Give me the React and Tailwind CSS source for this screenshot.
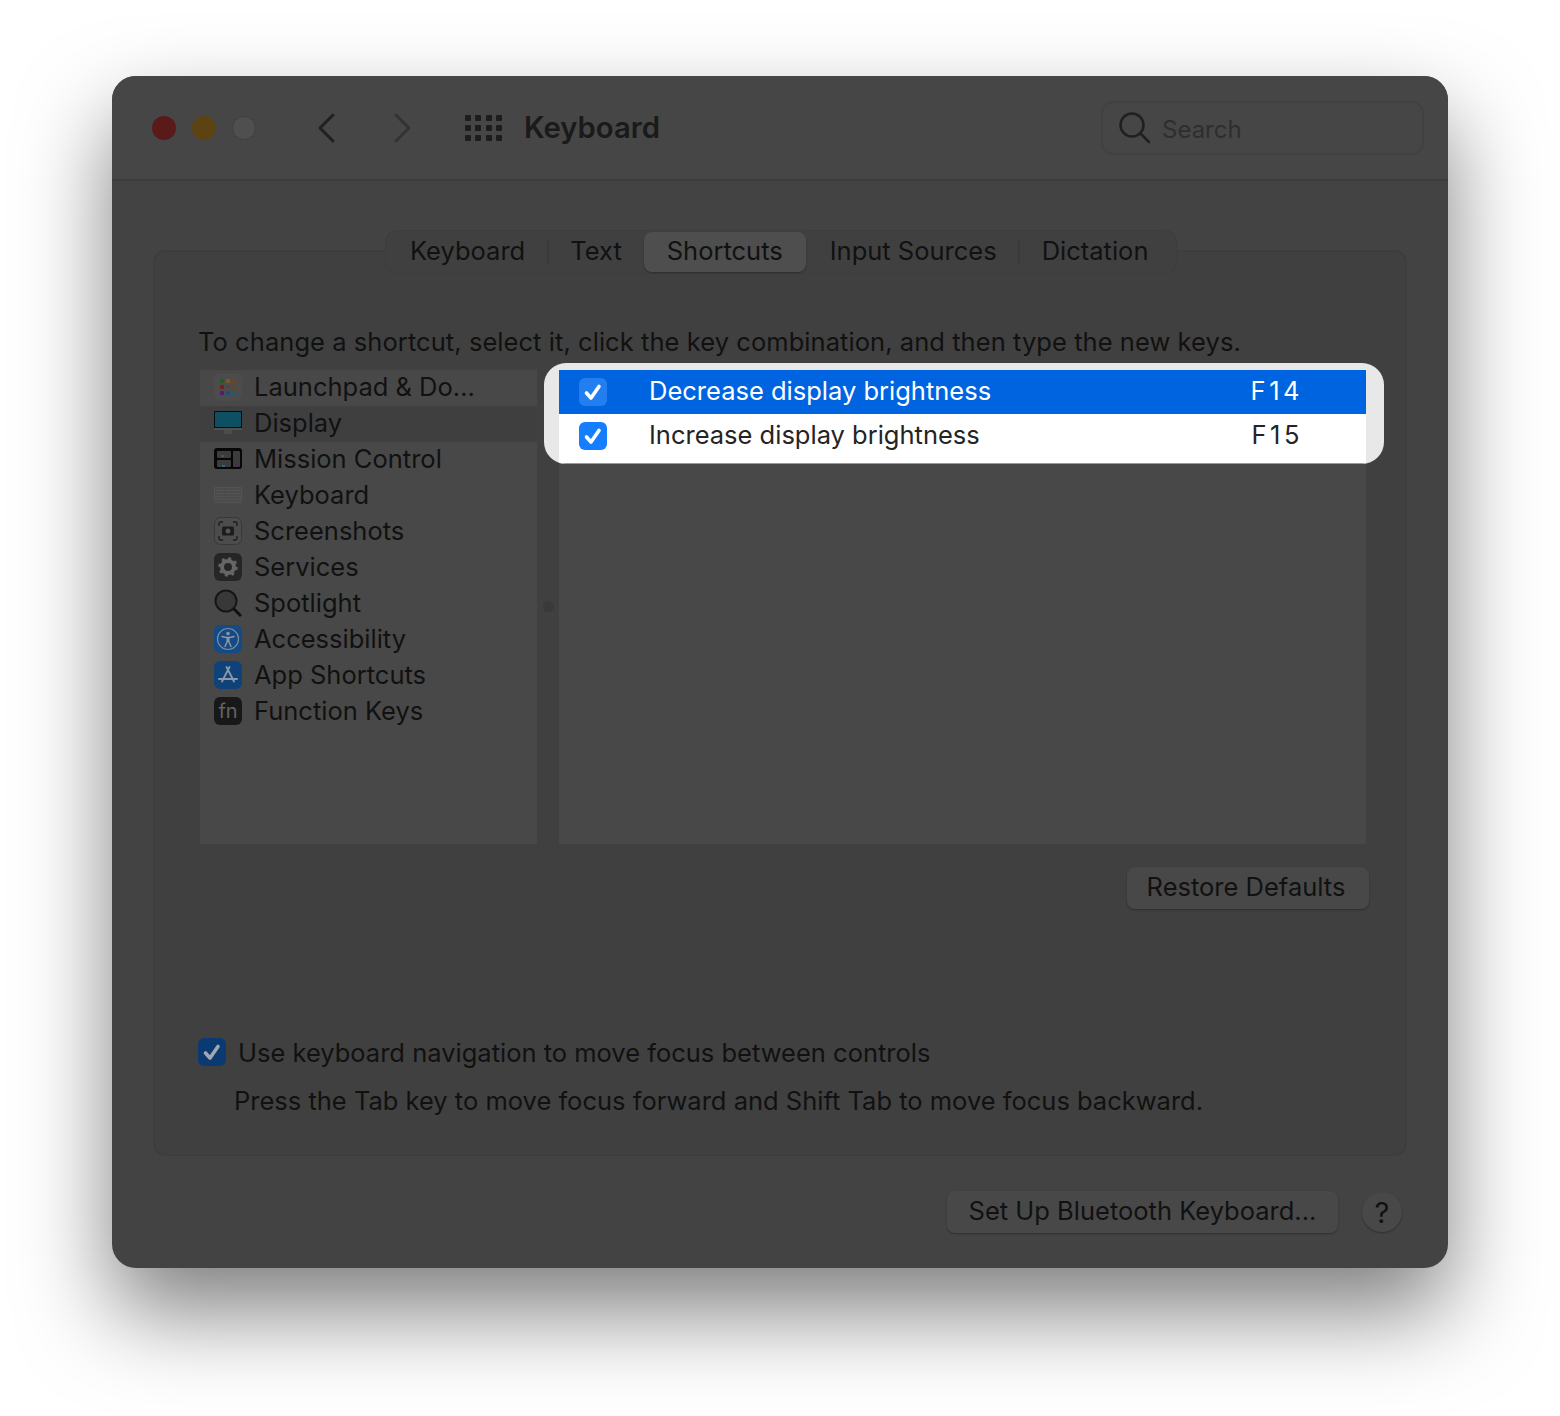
const fontStack = { fontFamily: 'Inter, "Liberation Sans", sans-serif' };

function LaunchpadIcon() {
  const dots = ['#245a24', '#7a5d1a', '#7a421a', '#7a1c1c', '#4a4a4a', '#6a421c', '#4f1b6b', '#1b4f7a', '#1b5d7a'];
  return (
    <div className="w-7 h-7 rounded-md bg-[#4c4c4c] grid grid-cols-3 gap-[2px] p-[6px]">
      {dots.map((c, i) => (
        <span key={i} className="rounded-[1px]" style={{ backgroundColor: c }} />
      ))}
    </div>
  );
}

function DisplayIcon() {
  return (
    <svg width="28" height="28" viewBox="0 0 28 28">
      <rect x="10" y="21" width="8" height="4" fill="#4c4c4c" />
      <rect x="0.5" y="2.5" width="27" height="16" fill="#0f4f62" stroke="#0c0c0c" />
      <rect x="0" y="19" width="28" height="2" fill="#505050" />
    </svg>
  );
}

function MissionIcon() {
  return (
    <svg width="28" height="28" viewBox="0 0 28 28">
      <rect x="0" y="3" width="28" height="21" rx="3" fill="#070707" />
      <rect x="3" y="6" width="14" height="7" rx="1" fill="#3c3c3c" />
      <rect x="3" y="15" width="14" height="7" rx="1" fill="#3c3c3c" />
      <rect x="19" y="6" width="7" height="16" rx="1" fill="#3c3c3c" />
      <rect x="7" y="10" width="3" height="2" fill="#2f6b2f" />
      <rect x="8" y="20" width="3" height="2" fill="#1f6a8a" />
      <rect x="21" y="19" width="3" height="2" fill="#5a1f7a" />
    </svg>
  );
}

function KeyboardIcon() {
  return (
    <svg width="28" height="28" viewBox="0 0 28 28">
      <rect x="0" y="6" width="28" height="16" rx="1" fill="#535353" />
      {[8, 11, 14, 17, 20].map((y) => (
        <line key={y} x1="1" x2="27" y1={y} y2={y} stroke="#404040" strokeWidth="1.2" strokeDasharray="1.6 0.7" />
      ))}
    </svg>
  );
}

function ScreenshotIcon() {
  return (
    <svg width="28" height="28" viewBox="0 0 28 28" fill="none">
      <rect x="0.5" y="0.5" width="27" height="27" rx="6" fill="#4c4c4c" stroke="#383838" />
      <path d="M5 9V6.5A1.5 1.5 0 0 1 6.5 5H9M19 5h2.500A1.500 1.500 0 0 1 23 6.500V9M23 19v2.500A1.500 1.500 0 0 1 21.500 23H19M9 23H6.500A1.500 1.500 0 0 1 5 21.500V19" stroke="#1c1c1c" strokeWidth="1.3" />
      <rect x="8" y="9.500" width="12" height="9" rx="1.500" fill="#1c1c1c" />
      <circle cx="14" cy="14" r="2.500" fill="#555" />
    </svg>
  );
}

function ServicesIcon() {
  return (
    <svg width="28" height="28" viewBox="0 0 28 28">
      <rect width="28" height="28" rx="6" fill="#262626" />
      <circle cx="14" cy="14" r="6" fill="none" stroke="#666666" strokeWidth="4" />
      <circle cx="14" cy="14" r="8.500" fill="none" stroke="#666666" strokeWidth="2.500" strokeDasharray="3 3.670" />
    </svg>
  );
}

function SpotlightIcon() {
  return (
    <svg width="28" height="28" viewBox="0 0 28 28" fill="none">
      <circle cx="12" cy="12" r="10.500" fill="#383838" stroke="#161616" strokeWidth="2" />
      <line x1="19.500" y1="19.500" x2="27" y2="27" stroke="#111111" strokeWidth="3" />
    </svg>
  );
}

function AccessibilityIcon() {
  return (
    <svg width="28" height="28" viewBox="0 0 28 28" fill="none">
      <rect width="28" height="28" rx="6" fill="#144a86" />
      <circle cx="14" cy="14" r="10.500" stroke="#7f8c9a" strokeWidth="1.200" />
      <circle cx="14" cy="8.500" r="1.800" fill="#8c98a6" />
      <path d="M8 11.500C11 12.700 17 12.700 20 11.500" stroke="#8c98a6" strokeWidth="1.500" strokeLinecap="round" />
      <path d="M14 12.500V16.500" stroke="#8c98a6" strokeWidth="3" />
      <path d="M13.500 16 11 21.500M14.500 16 17 21.500" stroke="#8c98a6" strokeWidth="1.500" strokeLinecap="round" />
    </svg>
  );
}

function AppShortcutsIcon() {
  return (
    <svg width="28" height="28" viewBox="0 0 28 28" fill="none">
      <rect width="28" height="28" rx="6" fill="#0f4279" />
      <path d="M15.500 6 8 20.500M12.500 6 20 20.500M5 18h18" stroke="#8c98a6" strokeWidth="1.800" strokeLinecap="round" />
    </svg>
  );
}

function FnIcon() {
  return (
    <div className="w-7 h-7 rounded-md bg-[#181818] flex items-center justify-center text-[20px] leading-none text-[#646464]">
      fn
    </div>
  );
}

const shortcutGroups = [
  { label: 'Launchpad & Do...', icon: <LaunchpadIcon /> },
  { label: 'Display', icon: <DisplayIcon />, selected: true },
  { label: 'Mission Control', icon: <MissionIcon /> },
  { label: 'Keyboard', icon: <KeyboardIcon /> },
  { label: 'Screenshots', icon: <ScreenshotIcon /> },
  { label: 'Services', icon: <ServicesIcon /> },
  { label: 'Spotlight', icon: <SpotlightIcon /> },
  { label: 'Accessibility', icon: <AccessibilityIcon /> },
  { label: 'App Shortcuts', icon: <AppShortcutsIcon /> },
  { label: 'Function Keys', icon: <FnIcon /> },
];

function Checkbox({ className }) {
  return (
    <span className={`w-7 h-7 rounded-md flex items-center justify-center ${className}`}>
      <svg width="28" height="28" viewBox="0 0 28 28" fill="none">
        <path d="M7.5 15 12 20 20 8.500" stroke="currentColor" strokeWidth="3.600" strokeLinecap="round" strokeLinejoin="round" />
      </svg>
    </span>
  );
}

function TabDivider() {
  return <span className="block w-[2px] h-6 bg-[#3a3a3a]" />;
}

export default function App() {
  return (
    <div className="h-[1416px] bg-white pt-[76px] px-[112px] text-[#111111] overflow-hidden" style={fontStack}>
      <div className="h-[1192px] w-[1336px] rounded-[24px] bg-[#434343] shadow-[0_44px_90px_rgba(0,0,0,0.5)] flex flex-col">

        {/* Title bar */}
        <div className="h-[105px] shrink-0 rounded-t-[24px] bg-[#464646] border-b-2 border-[#3c3c3c] flex items-center pl-10 pr-6">
          <div className="flex items-center gap-4">
            <span className="w-6 h-6 rounded-full bg-[#5a1a1a]" />
            <span className="w-6 h-6 rounded-full bg-[#5e4312]" />
            <span className="w-6 h-6 rounded-full bg-[#4f4f4f] border border-[#3f3f3f]" />
          </div>
          <svg className="ml-[60px]" width="20" height="32" viewBox="0 0 20 32" fill="none">
            <path d="M17 3 4 16l13 13" stroke="#202020" strokeWidth="3" strokeLinecap="round" strokeLinejoin="round" />
          </svg>
          <svg className="ml-[57px]" width="20" height="32" viewBox="0 0 20 32" fill="none">
            <path d="M3 3l13 13L3 29" stroke="#333333" strokeWidth="3" strokeLinecap="round" strokeLinejoin="round" />
          </svg>
          <div className="ml-[52px] grid grid-cols-4 gap-x-[4px] gap-y-[4px] w-[37px]">
            {Array.from({ length: 12 }).map((_, i) => (
              <span key={i} className="w-[6px] h-[6px] rounded-[1px] bg-[#1d1d1d]" />
            ))}
          </div>
          <span className="ml-[22px] text-[29.3px] font-semibold leading-none text-[#1a1a1a]">Keyboard</span>
          <div className="ml-auto w-[323px] h-[54px] rounded-xl border-2 border-[#414141] flex items-center pl-[15px] gap-[10px]">
            <svg width="34" height="34" viewBox="0 0 34 34" fill="none">
              <circle cx="14" cy="14" r="11.500" stroke="#202020" strokeWidth="2.500" />
              <line x1="22.500" y1="22.500" x2="31" y2="31" stroke="#202020" strokeWidth="2.500" strokeLinecap="round" />
            </svg>
            <span className="text-[24px] text-[#2e2e2e] mt-1">Search</span>
          </div>
        </div>

        {/* Tabs */}
        <div className="relative z-10 self-center mt-[49px] ml-[2px] h-[44px] w-[792px] rounded-xl bg-[#404040] border border-[#3d3d3d] flex items-center text-[25.5px] leading-none">
          <span className="ml-[24px] mb-[2px]">Keyboard</span>
          <span className="ml-[22px]"><TabDivider /></span>
          <span className="ml-[21px] mb-[2px]">Text</span>
          <span className="ml-[22px] h-[40px] w-[162px] rounded-lg bg-[#4e4e4e] shadow-[0_1px_2px_rgba(0,0,0,0.3)] flex items-center justify-center pb-[2px]">Shortcuts</span>
          <span className="ml-[24px] mb-[2px]">Input Sources</span>
          <span className="ml-[21px]"><TabDivider /></span>
          <span className="ml-[22px] mb-[2px]">Dictation</span>
        </div>

        {/* Group box */}
        <div className="mt-[-24px] mx-[41px] h-[906px] rounded-xl bg-[#404040] border-2 border-[#3d3d3d] pt-[72px] pl-[43px] flex flex-col shrink-0 text-[25.5px]">
          <p className="leading-9 whitespace-nowrap tracking-[0.06px]">
            To change a shortcut, select it, click the key combination, and then type the new keys.
          </p>

          <div className="flex mt-[10px] pl-[2px] items-stretch h-[474px]">
            <div className="w-[337px] bg-[#484848] flex flex-col">
              {shortcutGroups.map((g) => (
                <div key={g.label} className={`h-9 pl-[14px] pb-[2px] flex items-center gap-3 shrink-0 ${g.selected ? 'bg-[#3f3f3f]' : ''}`}>
                  {g.icon}
                  <span>{g.label}</span>
                </div>
              ))}
            </div>
            <div className="w-[22px] flex items-center justify-center">
              <span className="w-[11px] h-[11px] rounded-full bg-[#3a3a3a] mt-[-1px]" />
            </div>
            <div className="relative w-[807px] bg-[#484848]">
              {/* highlighted callout over the list */}
              <div className="absolute left-[-15px] top-[-7px] w-[840px] h-[101px] rounded-[22px] bg-[#e8e8e8] pt-[7px] pl-[15px] overflow-hidden">
                <div className="w-[807px] h-11 bg-[#0064e1] flex items-center pl-5 text-white">
                  <Checkbox className="bg-[#237ff0] text-white" />
                  <span className="ml-[42px] mb-[2px]">Decrease display brightness</span>
                  <span className="ml-auto mr-[63px] mb-[2px] tracking-[3.5px]">F14</span>
                </div>
                <div className="w-[807px] h-[50px] bg-white border-b border-[#9a9a9a] flex items-center pl-5 pb-[6px] text-[#242424]">
                  <Checkbox className="bg-[#147eff] text-white" />
                  <span className="ml-[42px]">Increase display brightness</span>
                  <span className="ml-auto mr-[63px] tracking-[3.5px]">F15</span>
                </div>
              </div>
            </div>
          </div>

          <div className="flex justify-end mt-[23px] pr-[36px]">
            <button className="w-[242px] h-[42px] rounded-lg bg-[#484848] shadow-[0_1px_2px_rgba(0,0,0,0.3)] leading-none pb-[2px] pr-1">
              Restore Defaults
            </button>
          </div>

          <div className="flex items-center gap-3 mt-[125px] h-9">
            <Checkbox className="bg-[#0b3a73] text-[#a0a8b2]" />
            <span className="mt-[2px]">Use keyboard navigation to move focus between controls</span>
          </div>
          <p className="leading-9 mt-[13px] ml-9 whitespace-nowrap">
            Press the Tab key to move focus forward and Shift Tab to move focus backward.
          </p>
        </div>

        {/* Bottom buttons */}
        <div className="flex justify-end items-center mt-[35px] pr-[46px] gap-6 text-[25.5px]">
          <button className="w-[391px] h-[42px] rounded-lg bg-[#484848] shadow-[0_1px_2px_rgba(0,0,0,0.3)] leading-none pb-[2px]">
            Set Up Bluetooth Keyboard...
          </button>
          <button className="w-10 h-10 rounded-full bg-[#484848] shadow-[0_1px_2px_rgba(0,0,0,0.3)] text-[29px] leading-none">
            ?
          </button>
        </div>
      </div>
    </div>
  );
}
